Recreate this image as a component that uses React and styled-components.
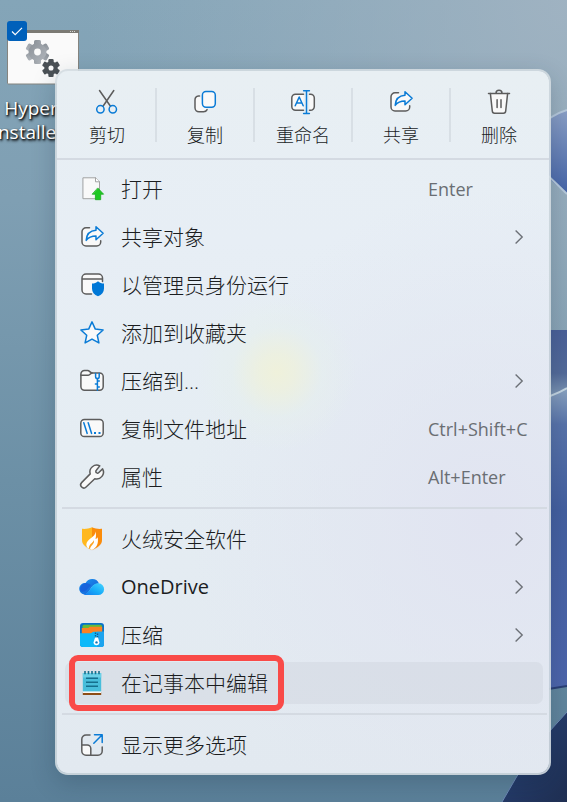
import React from "react";
import styled, { createGlobalStyle } from "styled-components";

const GlobalStyle = createGlobalStyle`
  *, *::before, *::after { box-sizing: border-box; }
  body {
    margin: 0;
    font-family: "Open Sans", "Noto Sans CJK SC", sans-serif;
    color: #1b1d1f;
  }
  button { font: inherit; color: inherit; border: 0; background: none; padding: 0; cursor: default; }
`;

const Desktop = styled.main`
  position: relative;
  display: flex;
  align-items: flex-start;
  min-height: 100vh;
  padding: 69px 16px 27px 55px;
  overflow: hidden;
  background:
    radial-gradient(ellipse at 100% 0%, rgba(166, 182, 196, 0.8), transparent 60%),
    linear-gradient(180deg, #84a5b8 0%, #7f9fb3 25%, #6c90a6 60%, #5b8099 100%);
`;

const Wallpaper = styled.svg`
  position: absolute;
  inset: 0;
  width: 100%;
  height: 100%;
`;

const DesktopItem = styled.div`
  position: absolute;
  top: 21px;
  left: 0;
  width: 62px;
`;

const Tick = styled.label`
  position: absolute;
  top: 0;
  left: 7px;
  width: 20px;
  height: 20px;
  z-index: 1;
  input {
    appearance: none;
    display: block;
    width: 20px;
    height: 20px;
    margin: 0;
    border-radius: 3px;
    background: #0060ba;
  }
  svg { position: absolute; inset: 0; }
`;

const InstallerPicture = styled.svg`
  display: block;
  width: 72px;
  height: 55px;
  margin: 9px 0 11px 7px;
`;

const FileName = styled.div`
  display: flex;
  flex-direction: column;
  align-items: center;
  font-size: 19px;
  line-height: 24px;
  color: #fff;
  text-shadow: 1px 1px 2px #000, 1px 2px 3px rgba(0, 0, 0, 0.8);
`;

const Menu = styled.div`
  position: relative;
  flex: 1;
  min-width: 0;
  border: 2px solid rgba(211, 219, 225, 0.9);
  border-radius: 13px;
  box-shadow: 0 8px 24px rgba(20, 40, 60, 0.22);
  background:
    radial-gradient(circle 80px at 220px 301px, #eff1db 0, rgba(238, 241, 220, 0.8) 18px, rgba(230, 240, 236, 0.5) 45px, transparent 80px),
    radial-gradient(ellipse 300px 330px at 88% 64%, #e1e4f1, transparent),
    linear-gradient(180deg, #e8eff3 0%, #e7eef5 24%, #e5edf3 55%, #e2e9f0 100%);
  background-clip: padding-box;
  background-color: #e4ebf2;
`;

const Toolbar = styled.div`
  display: flex;
  height: 87px;
  padding: 0 2px;
`;

const ToolButton = styled.button`
  flex: 1;
  display: flex;
  flex-direction: column;
  align-items: center;
  gap: 9px;
  padding-top: 19px;
  font-size: 18px;
  font-weight: 300;
  line-height: 24px;
  white-space: nowrap;
`;

const ToolDivider = styled.span`
  width: 2px;
  height: 54px;
  margin-top: 17px;
  background: #d8dfe5;
`;

const Rule = styled.hr`
  height: 2px;
  margin: ${(p) => (p.$inset ? "0 2px 1px 5px" : "0")};
  border: 0;
  background: #d4dae2;
`;

const Group = styled.div`
  display: flex;
  flex-direction: column;
  gap: 6px;
  padding: 8px 6px 9px 8px;
  &:last-child { padding-bottom: 7px; }
`;

const MenuRow = styled.button`
  position: relative;
  display: flex;
  align-items: center;
  height: 42px;
  padding-left: 15px;
  gap: 17px;
  border-radius: 7px;
  text-align: left;
  background: ${(p) => (p.$active ? "rgba(200, 207, 215, 0.35)" : "transparent")};
`;

const Label = styled.span`
  flex: 1;
  font-size: ${(p) => (p.$latin ? 20 : 21)}px;
  font-weight: ${(p) => (p.$latin ? 400 : 300)};
  line-height: 28px;
  white-space: nowrap;
`;

const Shortcut = styled.span`
  width: 115px;
  font-size: 18px;
  line-height: 24px;
  color: #6a6e73;
  white-space: nowrap;
`;

const Arrow = styled.svg`
  width: 10px;
  height: 16px;
  margin-right: 19px;
`;

const Mark = styled.span`
  position: absolute;
  top: -7px;
  bottom: -7px;
  left: 4px;
  width: 215px;
  border: 6px solid #f94a48;
  border-radius: 9px;
`;

const Glyph = styled.svg`
  flex: none;
  width: 24px;
  height: 24px;
  overflow: visible;
  fill: none;
  stroke-linecap: round;
  stroke-linejoin: round;
  stroke-width: 1.5;
`;

const GREY = "#5c5c5c";
const BLUE = "#0a7bd6";
const PAPER = "#f9f9f9";

const icons = {
  cut: (
    <>
      <path stroke={GREY} d="M4.5 .5 15.5 16.2M18.8 .5 8 16.2" />
      <circle cx="5.4" cy="19.3" r="3.7" stroke={BLUE} />
      <circle cx="17.8" cy="19.3" r="3.7" stroke={BLUE} />
    </>
  ),
  copy: (
    <>
      <path fill={PAPER} stroke={GREY} d="M6.5 6H5.5A4 4 0 0 0 2 10v7.8a4 4 0 0 0 4 4h4.5a4 4 0 0 0 3.6-2.2" />
      <rect x="9.4" y="1.6" width="12.9" height="15.6" rx="3.6" fill={PAPER} stroke={BLUE} />
    </>
  ),
  rename: (
    <>
      <path fill={PAPER} stroke={GREY} d="M12.5 4.2H4.5A3.8 3.8 0 0 0 .8 8v8.5a3.8 3.8 0 0 0 3.7 3.8h8M18.5 4.2h1a3.8 3.8 0 0 1 3.8 3.8v8.5a3.8 3.8 0 0 1-3.8 3.8h-1" />
      <path stroke={BLUE} d="M4.2 15.8 8.2 7l4 8.8M5.6 13h5.2M15.5 .8v22.6M12.6 .8h5.8M12.6 23.4h5.8" />
    </>
  ),
  share: (
    <>
      <path fill={PAPER} stroke={GREY} d="M9.5 2.8H6A4 4 0 0 0 2 6.8V17a4 4 0 0 0 4 4h10.7a4 4 0 0 0 4-4v-1.2" />
      <path fill={PAPER} stroke={BLUE} d="M16 1.7 23.1 8.3 16 14.8v-3.7c-4.2 0-7.4 1.1-9.8 4.3.3-6 3.8-9.7 9.8-10.1z" />
    </>
  ),
  trash: (
    <>
      <path fill={PAPER} stroke={GREY} d="M3.4 3.6 5.3 21a2.3 2.3 0 0 0 2.3 2.2h8.8a2.3 2.3 0 0 0 2.3-2.2l1.9-17.4" />
      <path stroke={GREY} d="M1.5 3.6h21M9 3.3a3 3 0 0 1 6 0M10.1 9.8v7.6M14 9.8v7.6" />
    </>
  ),
  open: (
    <>
      <path fill={PAPER} stroke="#a2a3a3" strokeWidth="1" d="M3.3 .8h12.4l3.8 4v16.9H3.3z" />
      <path fill="#fff" stroke="#a2a3a3" strokeWidth="1" d="M15.5 .8v4h4" />
      <path fill="#1fc922" stroke="#18ab1c" strokeWidth=".8" d="m18 11.2 5.6 6h-2.9v5.5h-5.3v-5.5h-2.9z" />
    </>
  ),
  admin: (
    <>
      <path fill={PAPER} stroke={GREY} d="M11.5 21H6a4 4 0 0 1-4-4V5a4 4 0 0 1 4-4h12.5a4 4 0 0 1 4 4v3.5M2 6h20.5" />
      <path fill="#0078d7" d="M18 8.2c1.7 1.5 3.7 2.3 6 2.4v4.9c0 3.6-2.2 6.2-6 7.8-3.8-1.6-6-4.2-6-7.8v-4.9c2.3-.1 4.3-.9 6-2.4z" />
    </>
  ),
  star: (
    <path fill={PAPER} stroke={BLUE} d="m12 .9 3.3 7.2 7.8.9-5.8 5.3 1.6 7.6-6.9-3.8-6.9 3.8 1.6-7.6L.9 9l7.8-.9z" />
  ),
  zip: (
    <>
      <path fill={PAPER} stroke={GREY} d="M.9 5a3.6 3.6 0 0 1 3.6-3.6h3.2c1.700 0 2.500 2.500 4.300 2.500h7.600A3.600 3.600 0 0 1 23.200 7.500v10.100a3.600 3.600 0 0 1-3.600 3.600H4.500a3.600 3.600 0 0 1-3.600-3.600z" />
      <path stroke={GREY} d="M1 6.200h7.300c1.800 0 2.300-2.200 4-2.300" />
      <path stroke={BLUE} d="M15.600 4.600v3.200a1.700 1.700 0 0 0 3.600 0V4.600M17.400 9.600v11.600M17.400 12h1.900M15.400 15h2M17.400 18h1.900" />
    </>
  ),
  path: (
    <>
      <rect x=".8" y="2.600" width="22.400" height="17" rx="3.600" fill={PAPER} stroke={GREY} />
      <path stroke={BLUE} d="m3.800 5.800 3.400 10.600M8.200 5.800l3.400 10.600" />
      <path fill={BLUE} d="M14 15h2v2h-2zM18.500 15h2v2h-2z" />
    </>
  ),
  wrench: (
    <path
      fill={PAPER}
      stroke={GREY}
      d="M19.8.9A6.8 6.8 0 0 0 10.2 8.9L1.6 17.6a3.1 3.1 0 0 0 4.5 4.4l8.7-8.3A6.8 6.8 0 0 0 22.6 3.9l-4 3.8a1.6 1.6 0 0 1-2.3-.1 1.6 1.6 0 0 1 0-2.3z"
    />
  ),
  flame: (
    <>
      <path fill="#dfe1e6" d="M12 1c3 1.200 6.500 1.900 10 1.500v11c0 4.800-4 7.800-10 10.300C6 21.300 2 18.300 2 13.500v-11C5.500 2.900 9 2.200 12 1z" />
      <path fill="#ffb81f" d="M12 .3C9 1.500 5.500 2.200 2 1.800V13c0 4.600 4 7.400 10 9.900z" />
      <path fill="#fb8c0a" d="M12 .3c3 1.200 6.500 1.900 10 1.500V13c0 4.600-4 7.400-10 9.900z" />
      <path fill="#fff" d="M15 4.200c.9 3-1.400 4.900-4.600 7.400-3.200 2.600-5.200 5.400-3.200 8.800l4.800 2.700c5-2.700 6.700-7 5.700-12.900-.6 1-1.400 1.600-2.200 1.800.7-2.600.8-5.600-.5-7.800z" />
      <path fill="#fca321" d="M13.800 12.800c.3 2.600-4.600 3.600-5 8.600l1.200.6c.6-3.700 5.200-4.800 3.800-9.200z" />
    </>
  ),
  cloud: (
    <>
      <defs>
        <linearGradient id="cloudBack" x1="0" y1="0" x2="1" y2="1">
          <stop offset="0" stopColor="#1a9af4" />
          <stop offset="1" stopColor="#1655cf" />
        </linearGradient>
        <linearGradient id="cloudFront" x1="1" y1="0" x2="0" y2="1">
          <stop offset="0" stopColor="#47d4ff" />
          <stop offset=".55" stopColor="#16aaf8" />
          <stop offset="1" stopColor="#1679ee" />
        </linearGradient>
      </defs>
      <path fill="url(#cloudBack)" d="M5.600 8.100A7.500 7.500 0 0 1 19 8.400c-4.500.3-7 2.600-8.600 5.500-1.700 3.200-3.500 5.100-6.200 5.600A5.700 5.700 0 0 1 5.600 8.100z" />
      <path fill="url(#cloudFront)" d="M3.800 19.400c3.600-.7 5.200-3.400 7-6.100C13 10 15.300 8.200 18.500 8.300A5.800 5.800 0 0 1 18 20H6c-.8 0-1.500-.2-2.200-.6z" />
      <path fill="#155ad8" d="M.8 16.500a5.700 5.700 0 0 1 4.800-8.400C8 8 9.500 9 11 10.300c-3.200 2.600-4.500 7.200-10.200 6.200z" opacity=".75" />
    </>
  ),
  archive: (
    <>
      <rect width="24" height="24" rx="3" fill="#0873c9" />
      <path fill="#65bb39" d="M4 1.800h16.500a1.500 1.500 0 0 1 1.500 1.500V9H2.500V3.300A1.500 1.500 0 0 1 4 1.800z" />
      <path fill="#fb8122" d="M1.800 5h6.500l1.500-1.300h12.400V13H1.800z" />
      <path fill="#0eb9f9" d="M0 10.200h10.500c1.500 0 1.700-1.400 3.200-1.400H24V21a3 3 0 0 1-3 3H3a3 3 0 0 1-3-3z" />
      <path fill="#1ca3ee" d="M17 8.800h7V21a3 3 0 0 1-3 3h-4z" />
      <path stroke="#145b8d" strokeWidth="1.400" strokeLinecap="butt" strokeDasharray="1.500 1" d="M15.500 9.500v6M17.500 10.500v5" />
      <path fill="#fff" d="M15 14.500h3l1.400 4.800a2.900 2.900 0 1 1-5.800 0z" />
      <circle cx="16.500" cy="19.400" r="1.200" fill="#1475ba" />
    </>
  ),
  notepad: (
    <>
      <rect x="2.800" y="21" width="18.400" height="3" fill="#8e4d16" />
      <rect x="2.800" y="20" width="18.400" height="2" fill="#f8f8f7" />
      <path fill="#48bedb" d="M2.800 2h18.400v18.400H2.800z" />
      <path fill="#6cd1e7" d="M2.800 2h18.400v4.500H2.800z" />
      <path stroke="#156f8d" strokeWidth="1.600" strokeLinecap="butt" d="M5 0v3.200M8.500 0v3.200M12 0v3.200M15.500 0v3.200M19 0v3.200M6 7.200h12M6 11.200h12M6 15.200h12" />
    </>
  ),
  more: (
    <>
      <path fill={PAPER} d="M1.800 12h5.500a3.500 3.500 0 0 1 3.500 3.500v6.700h-5a4 4 0 0 1-4-4z" />
      <path stroke={GREY} d="M10 2H6a4.200 4.200 0 0 0-4.200 4.200V18A4.200 4.200 0 0 0 6 22.200h12a4.200 4.200 0 0 0 4.200-4.200v-4M1.800 12h5.500a3.500 3.500 0 0 1 3.500 3.500v6.700" />
      <path stroke={BLUE} d="M14.500 1.800h7.700v7.700M22 2l-8.200 8.200" />
    </>
  ),
};

const Icon = ({ name }) => (
  <Glyph viewBox="0 0 24 24" aria-hidden="true">{icons[name]}</Glyph>
);

const Chevron = () => (
  <Arrow viewBox="0 0 10 16" fill="none" stroke="#6d7177" strokeWidth="1.400" aria-hidden="true">
    <path d="m1.600 1.500 6.600 6.500-6.600 6.500" />
  </Arrow>
);

const tools = [
  ["cut", "剪切"],
  ["copy", "复制"],
  ["rename", "重命名"],
  ["share", "共享"],
  ["trash", "删除"],
];

const groups = [
  [
    { icon: "open", label: "打开", keys: "Enter" },
    { icon: "share", label: "共享对象", submenu: true },
    { icon: "admin", label: "以管理员身份运行" },
    { icon: "star", label: "添加到收藏夹" },
    { icon: "zip", label: "压缩到...", submenu: true },
    { icon: "path", label: "复制文件地址", keys: "Ctrl+Shift+C" },
    { icon: "wrench", label: "属性", keys: "Alt+Enter" },
  ],
  [
    { icon: "flame", label: "火绒安全软件", submenu: true },
    { icon: "cloud", label: "OneDrive", latin: true, submenu: true },
    { icon: "archive", label: "压缩", submenu: true },
    { icon: "notepad", label: "在记事本中编辑", active: true },
  ],
  [{ icon: "more", label: "显示更多选项" }],
];

const Gear = ({ x, y, size, fill }) => (
  <g transform={`translate(${x} ${y}) scale(${size})`}>
    {[0, 60, 120].map((angle) => (
      <rect key={angle} x="-3.500" y="-12" width="7" height="24" rx="1.500" fill={fill} transform={`rotate(${angle})`} />
    ))}
    <circle r="9" fill={fill} />
    <circle r="3.400" fill="#fafafa" />
  </g>
);

const Bloom = () => (
  <Wallpaper viewBox="0 0 567 802" preserveAspectRatio="xMaxYMin slice" aria-hidden="true">
    <defs>
      <linearGradient id="petalTop" x1="0" y1="0" x2="0" y2="1">
        <stop offset="0" stopColor="#8a9fc6" />
        <stop offset="1" stopColor="#4564a8" />
      </linearGradient>
      <linearGradient id="petalMid" x1="0" y1="0" x2="0" y2="1">
        <stop offset="0" stopColor="#4a6098" />
        <stop offset=".6" stopColor="#536a99" />
        <stop offset="1" stopColor="#8ba4bd" />
      </linearGradient>
      <linearGradient id="petalLow" x1="0" y1="0" x2="0" y2="1">
        <stop offset="0" stopColor="#8ba3c0" />
        <stop offset=".12" stopColor="#5873aa" />
        <stop offset=".4" stopColor="#445fa0" />
        <stop offset="1" stopColor="#4d65ac" />
      </linearGradient>
      <linearGradient id="petalDark" x1="0" y1="0" x2="1" y2="1">
        <stop offset="0" stopColor="#3a5690" />
        <stop offset=".45" stopColor="#243a68" />
        <stop offset="1" stopColor="#1f2f52" />
      </linearGradient>
    </defs>
    <path fill="url(#petalTop)" d="M520 152Q540 116 567 110V194L520 154z" />
    <path fill="none" stroke="#b7c9dc" strokeWidth="2" d="M536 130Q550 115 567 110M540 168 567 194" />
    <path fill="url(#petalMid)" d="M530 330h37v58q-8 6-37 14z" />
    <path fill="url(#petalLow)" d="M530 402q24-6 37-14v298l-37 6z" />
    <path fill="none" stroke="#c4d5e2" strokeWidth="2" d="M530 402q24-6 37-14" />
    <path stroke="#2a3f75" strokeWidth="2" d="m530 692 37-6" />
    <path fill="url(#petalDark)" d="M502 802q28-52 65-90v90z" />
    <path fill="none" stroke="#6e8bb6" strokeWidth="1" d="M502 802q28-52 65-90" />
  </Wallpaper>
);

export default function App() {
  return (
    <>
      <GlobalStyle />
      <Desktop>
        <Bloom />
        <DesktopItem>
          <Tick>
            <input type="checkbox" defaultChecked aria-label="Hyper nstaller" />
            <svg width="20" height="20" fill="none" stroke="#fff" strokeWidth="1.200" aria-hidden="true">
              <path d="m5 10.500 3.200 3.200 6.800-6.800" />
            </svg>
          </Tick>
          <InstallerPicture viewBox="0 0 72 55" aria-hidden="true">
            <defs>
              <linearGradient id="gearLight" x1="0" y1="0" x2="1" y2="1">
                <stop offset="0" stopColor="#8b9198" />
                <stop offset="1" stopColor="#b0b5bb" />
              </linearGradient>
            </defs>
            <rect x=".5" y=".5" width="71" height="53.500" rx="1" fill="#fafafa" stroke="#85847f" />
            <path fill="#7b7a74" d="M0 0h72v3H0z" />
            <path stroke="#d6d6d3" strokeDasharray="1 1" d="M63 1.500h6" />
            <Gear x="30.500" y="22" size="1" fill="url(#gearLight)" />
            <Gear x="44" y="38" size=".75" fill="#4b5156" />
          </InstallerPicture>
          <FileName>
            <span>Hyper</span>
            <span>nstaller</span>
          </FileName>
        </DesktopItem>
        <Menu role="menu">
          <Toolbar>
            {tools.map(([icon, label], i) => (
              <React.Fragment key={icon}>
                {i > 0 && <ToolDivider />}
                <ToolButton type="button" role="menuitem">
                  <Icon name={icon} />
                  {label}
                </ToolButton>
              </React.Fragment>
            ))}
          </Toolbar>
          {groups.map((rows, i) => (
            <React.Fragment key={rows[0].icon}>
              <Rule $inset={i > 0} />
              <Group>
                {rows.map((row) => (
                  <MenuRow key={row.label} type="button" role="menuitem" $active={row.active}>
                    <Icon name={row.icon} />
                    <Label $latin={row.latin}>{row.label}</Label>
                    {row.keys && <Shortcut>{row.keys}</Shortcut>}
                    {row.submenu && <Chevron />}
                    {row.active && <Mark />}
                  </MenuRow>
                ))}
              </Group>
            </React.Fragment>
          ))}
        </Menu>
      </Desktop>
    </>
  );
}
